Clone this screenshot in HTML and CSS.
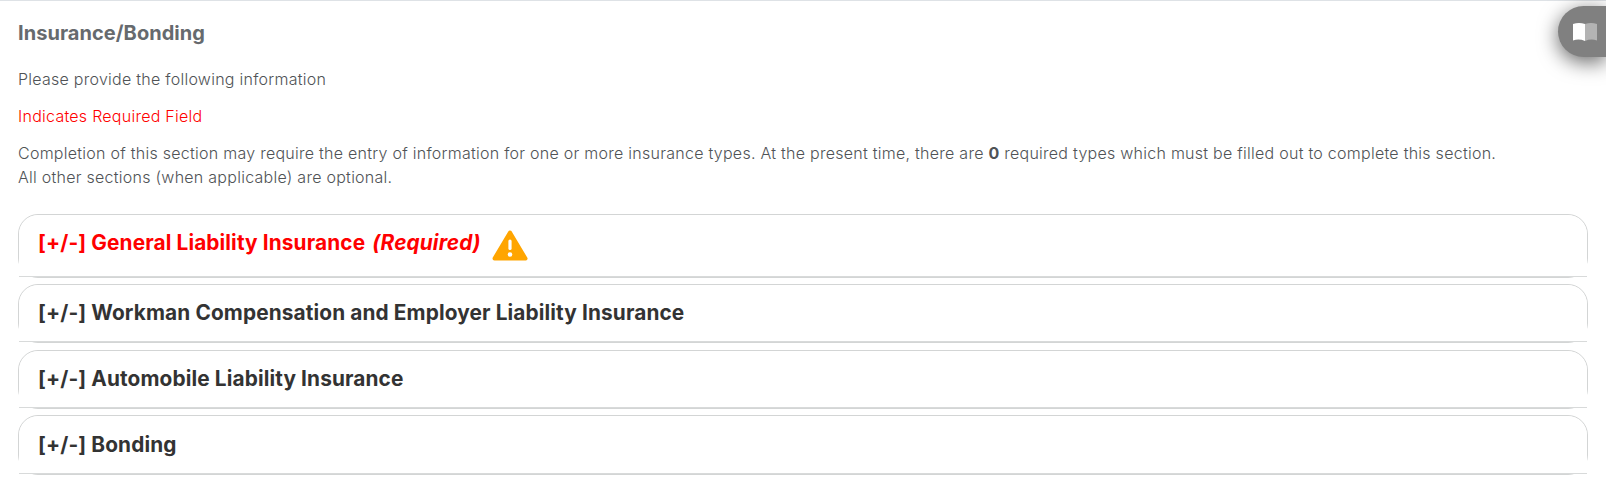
FILE: index.html
```html
<!DOCTYPE html>
<html lang="en">
<head>
	<meta charset="UTF-8">
	<title>Insurance/Bonding</title>
	<link rel="stylesheet" href="styles.css">
</head>
<body>
	<div class="page">
		<h1>Insurance/Bonding</h1>
		<p>Please provide the following information</p>
		<p class="required">Indicates Required Field</p>
		<p>Completion of this section may require the entry of information for one or more insurance types. At the present time, there are <b>0</b> required types which must be filled out to complete this section.<br>All other sections (when applicable) are optional.</p>
		<div class="list">
			<div class="item first">
				<div class="head">
					<h2 class="required">[+/-] General Liability Insurance <i>(Required)</i></h2>
					<svg class="warn" width="36" height="31" viewBox="0 0 36 31"><path d="M18 2.500L33.500 28.500H2.500Z" fill="#ffa500" stroke="#ffa500" stroke-width="4" stroke-linejoin="round"/><path d="M18 11v7.500" stroke="#fff" stroke-width="3.200" stroke-linecap="round"/><circle cx="18" cy="24.500" r="2.300" fill="#fff"/></svg>
				</div>
			</div>
			<div class="item"><div class="head"><h2>[+/-] Workman Compensation and Employer Liability Insurance</h2></div></div>
			<div class="item"><div class="head"><h2>[+/-] Automobile Liability Insurance</h2></div></div>
			<div class="item last"><div class="head"><h2>[+/-] Bonding</h2></div></div>
		</div>
	</div>
	<div class="guide">
		<svg width="24" height="18" viewBox="0 0 24 18"><path d="M0 1Q6-1 12 1V18Q6 15.500 0 17.500Z" fill="#fff"/><path d="M12 1Q18-1 24 1V17.500Q18 15.500 12 18Z" fill="#b3b3b3"/></svg>
	</div>
</body>
</html>
```
FILE: styles.css
```css
body{
	margin: 0;
	font: 300 16px/24px Inter, sans-serif;
	letter-spacing: 0.26px;
	color: #505356;
	background: #fff;
	overflow: hidden;
}
.page{
	border-top: 1px solid #dee2e6;
	padding: 17px 18px 0;
}
h1{
	margin: 0 0 19px;
	font-size: 20px;
	line-height: 30px;
	font-weight: 700;
	letter-spacing: 0.05px;
	color: #666a6e;
}
p{
	margin: 0 0 13px;
}
p b{
	font-weight: 700;
}
.required{
	color: #f00;
}
.list{
	margin-top: 25px;
}
.item{
	height: 59.2px;
	margin-bottom: 6.4px;
	border: 1px solid #d3d5d5;
	border-radius: 20px;
	box-sizing: border-box;
}
.first{
	height: 63.8px;
}
/* square bottom corners cover the rounded ones of the card */
.head{
	display: flex;
	height: 100%;
	padding: 0 19px;
	box-sizing: border-box;
	background: #fff;
	border-bottom: 1px solid #d8dada;
	border-radius: 20px 20px 0 0;
}
h2{
	margin: 0;
	font-size: 20.8px;
	line-height: 56px;
	font-weight: 700;
	letter-spacing: 0.13px;
	color: #333;
}
h2.required{
	color: #f00;
}
h2 i{
	margin-left: 2px;
}
.last h2{
	line-height: 57px;
}
.warn{
	margin: 15px 0 0 11px;
}
.guide{
	position: absolute;
	top: 6px;
	right: 0;
	display: flex;
	align-items: center;
	width: 48px;
	height: 51px;
	padding-left: 15px;
	box-sizing: border-box;
	background: #808080;
	border-radius: 26px 0 0 26px;
	box-shadow: 0 5px 20px rgba(0,0,0,0.6);
}
```
